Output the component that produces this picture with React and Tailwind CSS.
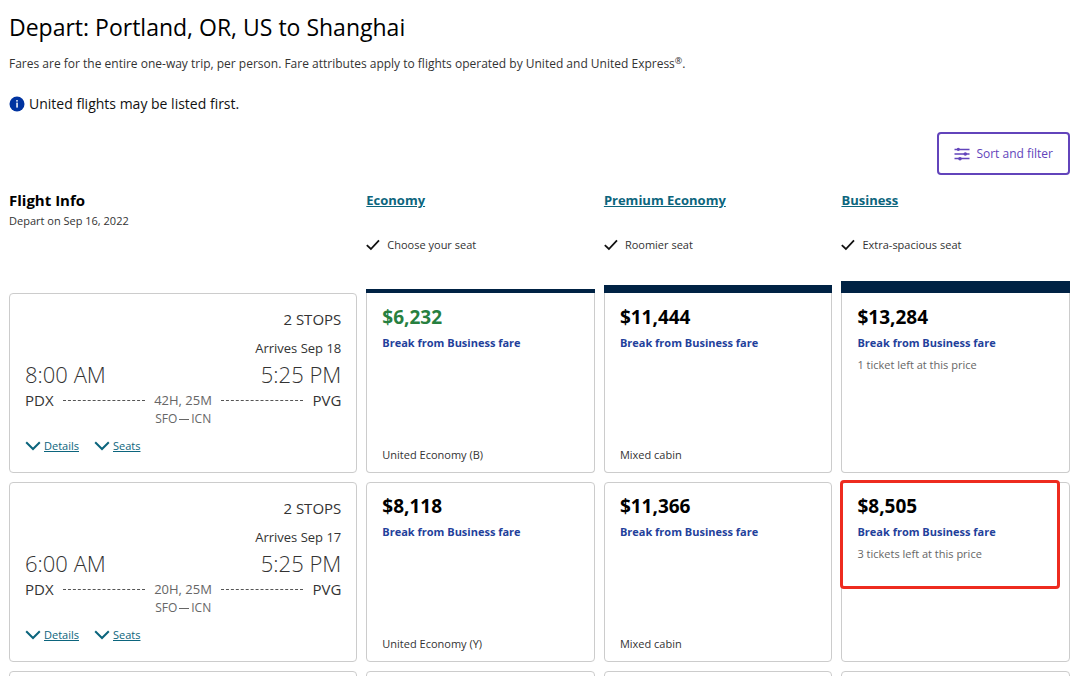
const cabins = [
  { name: "Economy", perk: "Choose your seat", bar: "border-b-4" },
  { name: "Premium Economy", perk: "Roomier seat", bar: "border-b-8" },
  { name: "Business", perk: "Extra-spacious seat", bar: "border-b-12" },
];

const flights = [
  {
    id: 1,
    stops: "2 STOPS",
    arrives: "Arrives Sep 18",
    departTime: "8:00 AM",
    arriveTime: "5:25 PM",
    from: "PDX",
    to: "PVG",
    duration: "42H, 25M",
    via: ["SFO", "ICN"],
    fares: [
      { price: "$6,232", lowest: true, cabin: "United Economy (B)" },
      { price: "$11,444", cabin: "Mixed cabin" },
      { price: "$13,284", left: "1 ticket left at this price" },
    ],
  },
  {
    id: 2,
    stops: "2 STOPS",
    arrives: "Arrives Sep 17",
    departTime: "6:00 AM",
    arriveTime: "5:25 PM",
    from: "PDX",
    to: "PVG",
    duration: "20H, 25M",
    via: ["SFO", "ICN"],
    fares: [
      { price: "$8,118", cabin: "United Economy (Y)" },
      { price: "$11,366", cabin: "Mixed cabin" },
      { price: "$8,505", left: "3 tickets left at this price", marked: true },
    ],
  },
];

function InfoIcon() {
  return (
    <svg viewBox="0 0 16 16" className="size-4 shrink-0" aria-hidden="true">
      <circle cx="8" cy="8" r="7.5" fill="#0033a0" />
      <rect x="7.3" y="6.6" width="1.5" height="5" fill="#fff" />
      <circle cx="8" cy="4.8" r="0.9" fill="#fff" />
    </svg>
  );
}

function FilterIcon() {
  return (
    <svg viewBox="0 0 16 14" className="h-[14px] w-4 shrink-0" aria-hidden="true">
      <path d="M0.5 2.5h15M0.5 7h15M0.5 11.5h15" stroke="#6244bb" strokeWidth="1.4" />
      <circle cx="4.3" cy="2.3" r="1.6" fill="#6244bb" />
      <circle cx="11.3" cy="7" r="1.8" fill="#6244bb" />
      <circle cx="6" cy="11.7" r="1.8" fill="#6244bb" />
    </svg>
  );
}

function CheckIcon() {
  return (
    <svg viewBox="0 0 14 12" className="h-3 w-[14px] shrink-0" aria-hidden="true">
      <path d="M0.8 6.2L4.9 10L13 1.3" fill="none" stroke="#111" strokeWidth="1.8" />
    </svg>
  );
}

function ChevronIcon() {
  return (
    <svg viewBox="0 0 16 10" className="h-[10px] w-4 shrink-0" aria-hidden="true">
      <path d="M1.2 1.3L8 8L14.8 1.3" fill="none" stroke="#0c657d" strokeWidth="2" />
    </svg>
  );
}

function Toggle({ children }) {
  return (
    <button type="button" className="flex items-center gap-[3px] text-[11px] leading-4 text-[#0c657d]">
      <ChevronIcon />
      <span className="underline">{children}</span>
    </button>
  );
}

function FlightCard({ flight }) {
  return (
    <article className="flex min-h-[180px] flex-col rounded border border-[#ccc] px-[15px] pt-[15px] text-[#333]">
      <p className="text-right text-[15px] leading-5">{flight.stops}</p>
      <p className="mt-[9px] text-right text-[13px] leading-5">{flight.arrives}</p>
      <div className="flex justify-between text-[22px] leading-8 font-light">
        <span>{flight.departTime}</span>
        <span>{flight.arriveTime}</span>
      </div>
      <div className="flex items-center text-[15px] leading-5">
        <span>{flight.from}</span>
        <span className="mx-[9px] flex-1 border-t border-dashed border-[#555]" />
        <span className="text-[13px] text-[#666]">{flight.duration}</span>
        <span className="mx-[9px] flex-1 border-t border-dashed border-[#555]" />
        <span>{flight.to}</span>
      </div>
      <p className="mt-px flex items-center justify-center gap-[2px] text-xs leading-4 text-[#666]">
        <span>{flight.via[0]}</span>
        <span className="w-[10px] border-t border-[#666]" />
        <span>{flight.via[1]}</span>
      </p>
      <div className="mt-[11px] flex gap-[15px]">
        <Toggle>Details</Toggle>
        <Toggle>Seats</Toggle>
      </div>
    </article>
  );
}

function FareCard({ fare, first }) {
  return (
    <article
      className={`relative flex min-h-[180px] flex-col border border-[#ccc] px-[15px] pb-[9px] text-[11px] leading-4 ${
        first ? "rounded-b border-t-0 pt-3" : "rounded pt-[11px]"
      }`}
    >
      <p
        className={`text-[19px] leading-6 font-bold ${
          fare.lowest ? "text-[#27803f]" : "text-black"
        }`}
      >
        {fare.price}
      </p>
      <p className="mt-[6px] font-bold text-[#1f419b]">Break from Business fare</p>
      {fare.left && <p className="mt-[6px] text-[#666]">{fare.left}</p>}
      {fare.cabin && <p className="mt-auto text-[#333]">{fare.cabin}</p>}
      {fare.marked && (
        <span className="pointer-events-none absolute -top-[3px] right-[9px] -left-[2px] h-[109px] rounded border-[3px] border-[#ee2b1f]" />
      )}
    </article>
  );
}

export default function App() {
  return (
    <main className="h-screen overflow-hidden bg-white pt-[11px] pr-[10px] pl-[9px] font-['Open_Sans',sans-serif] text-[#333]">
      <h1 className="text-[23px] leading-8 font-medium text-black">
        Depart: Portland, OR, US to Shanghai
      </h1>
      <p className="mt-[11px] text-xs leading-5">
        Fares are for the entire one-way trip, per person. Fare attributes apply to flights
        operated by United and United Express<sup>®</sup>.
      </p>
      <p className="mt-5 flex items-center gap-1 text-[14px] leading-5 font-medium text-[#111]">
        <InfoIcon />
        United flights may be listed first.
      </p>

      <div className="mt-[18px] flex justify-end">
        <button
          type="button"
          className="flex h-[43px] items-center gap-[6px] rounded border-2 border-[#6244bb] px-[15px] text-xs text-[#6244bb]"
        >
          <FilterIcon />
          Sort and filter
        </button>
      </div>

      <div className="mt-[15px] grid grid-cols-[349fr_229fr_229fr_229fr] items-end gap-x-[9px]">
        <header className="self-start">
          <h2 className="text-[15px] leading-5 font-bold text-black">Flight Info</h2>
          <p className="mt-[3px] text-[11px] leading-4">Depart on Sep 16, 2022</p>
        </header>
        {cabins.map((cabin) => (
          <header key={cabin.name} className={`h-[103px] border-[#002244] ${cabin.bar}`}>
            <a href="#" className="block text-[13px] leading-5 font-bold text-[#0c657d] underline">
              {cabin.name}
            </a>
            <p className="mt-[27px] flex items-center gap-[7px] text-[11px] leading-4">
              <CheckIcon />
              {cabin.perk}
            </p>
          </header>
        ))}
      </div>

      <div className="grid grid-cols-[349fr_229fr_229fr_229fr] gap-[9px]">
        {flights.map((flight, i) => (
          <section key={flight.id} className="contents">
            <FlightCard flight={flight} />
            {flight.fares.map((fare) => (
              <FareCard key={fare.price} fare={fare} first={i === 0} />
            ))}
          </section>
        ))}
        {/* next result, still loading */}
        {[0, 1, 2, 3].map((n) => (
          <div key={n} className="min-h-[180px] rounded border border-[#ccc]" />
        ))}
      </div>
    </main>
  );
}
